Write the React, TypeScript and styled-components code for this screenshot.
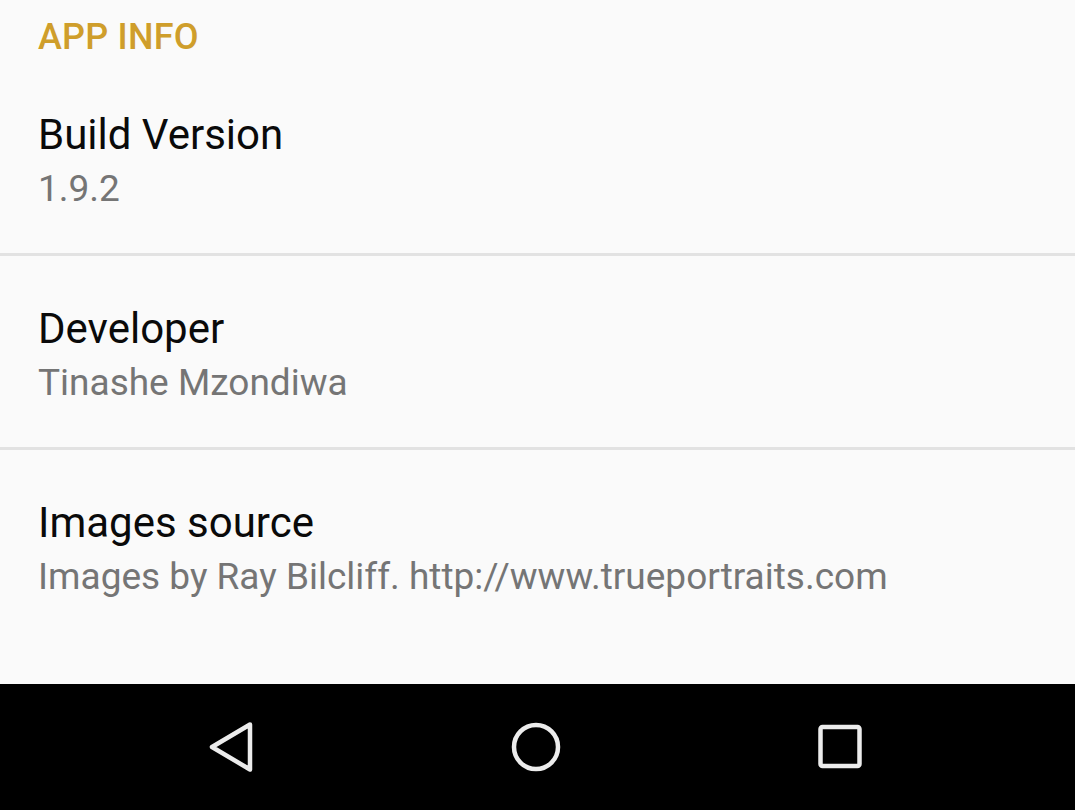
import styled, { createGlobalStyle } from 'styled-components';

const GlobalStyle = createGlobalStyle`
  html, body {
    margin: 0;
    padding: 0;
    background: #fafafa;
  }
  body {
    font-family: Roboto, "Noto Sans", "Liberation Sans", sans-serif;
  }
`;

const Screen = styled.div`
  display: flex;
  flex-direction: column;
  width: 1075px;
  height: 810px;
  overflow: hidden;
  background: #fafafa;
`;

const Content = styled.main`
  flex: 1;
  display: flex;
  flex-direction: column;
`;

const SectionHeader = styled.h2`
  margin: 0;
  padding: 13px 38px 0;
  font-size: 36px;
  line-height: 49px;
  font-weight: 500;
  color: #cf9e2b;
  letter-spacing: 0.2px;
`;

const Row = styled.div<{ $last?: boolean }>`
  display: flex;
  flex-direction: column;
  padding: 50px 38px 37px;
  border-bottom: ${(p) => (p.$last ? 'none' : '3px solid #e2e2e2')};
`;

const Title = styled.div`
  font-size: 42px;
  line-height: 46px;
  color: #0a0a0a;
`;

const Subtitle = styled.div`
  margin-top: 4px;
  font-size: 37px;
  line-height: 54px;
  color: #757575;
`;

const NavBar = styled.nav`
  height: 126px;
  flex-shrink: 0;
  background: #000;
  display: flex;
  justify-content: center;
  align-items: center;
  padding-right: 4px;
`;

const NavButton = styled.div`
  width: 304px;
  display: flex;
  justify-content: center;
  align-items: center;
`;

const NavIcon = styled.svg`
  width: 60px;
  height: 60px;
  fill: none;
  stroke: #ececec;
  stroke-width: 4.5;
  stroke-linejoin: round;
  stroke-linecap: round;
`;

const items = [
  { title: 'Build Version', value: '1.9.2' },
  { title: 'Developer', value: 'Tinashe Mzondiwa' },
  { title: 'Images source', value: 'Images by Ray Bilcliff. http://www.trueportraits.com' },
];

export default function App() {
  return (
    <Screen>
      <GlobalStyle />
      <Content>
        <SectionHeader>APP INFO</SectionHeader>
        {items.map((item, i) => (
          <Row key={item.title} $last={i === items.length - 1}>
            <Title>{item.title}</Title>
            <Subtitle>{item.value}</Subtitle>
          </Row>
        ))}
      </Content>
      <NavBar>
        <NavButton>
          <NavIcon viewBox="0 0 60 60">
            <path d="M48 7.5 L10 30 L48 52.5 Z" />
          </NavIcon>
        </NavButton>
        <NavButton>
          <NavIcon viewBox="0 0 60 60">
            <circle cx="30" cy="30" r="22" />
          </NavIcon>
        </NavButton>
        <NavButton>
          <NavIcon viewBox="0 0 60 60">
            <rect x="10.5" y="10" width="39" height="39" rx="2" />
          </NavIcon>
        </NavButton>
      </NavBar>
    </Screen>
  );
}
